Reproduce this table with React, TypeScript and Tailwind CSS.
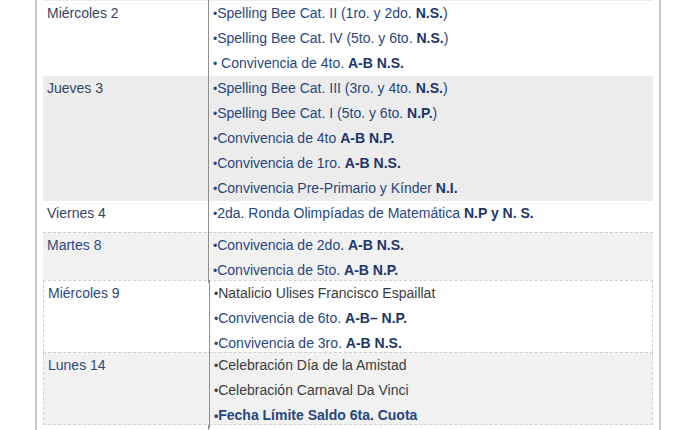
const blue = "text-[#27477f]";
const gray = "text-[#3b3b3b]";

type Line = { text: string; bold?: string; tail?: string; tone?: "blue" | "gray"; strong?: boolean; sep?: string };

type Row = {
  day: string;
  lines: Line[];
  h: string;
  bg: string;
  frame: string;
};

const rows: Row[] = [
  {
    day: "Miércoles 2",
    h: "h-[75px]",
    bg: "bg-white",
    frame: "",
    lines: [
      { text: "Spelling Bee Cat. II (1ro. y 2do. ", bold: "N.S.", tail: ")" },
      { text: "Spelling Bee Cat. IV (5to. y 6to. ", bold: "N.S.", tail: ")" },
      { text: "Convivencia de 4to. ", bold: "A-B N.S.", sep: "• " },
    ],
  },
  {
    day: "Jueves 3",
    h: "h-[125px]",
    bg: "bg-[#ececec]",
    frame: "",
    lines: [
      { text: "Spelling Bee Cat. III (3ro. y 4to. ", bold: "N.S.", tail: ")" },
      { text: "Spelling Bee Cat. I (5to. y 6to. ", bold: "N.P.", tail: ")" },
      { text: "Convivencia de 4to ", bold: "A-B N.P." },
      { text: "Convivencia de 1ro. ", bold: "A-B N.S." },
      { text: "Convivencia Pre-Primario y Kínder ", bold: "N.I." },
    ],
  },
  {
    day: "Viernes 4",
    h: "h-[31px]",
    bg: "bg-white",
    frame: "",
    lines: [{ text: "2da. Ronda Olimpíadas de Matemática ", bold: "N.P y N. S." }],
  },
  {
    day: "Martes 8",
    h: "h-[48px]",
    bg: "bg-[#f1f1f1]",
    frame: "border-t border-dashed border-[#cfcfcf]",
    lines: [
      { text: "Convivencia de 2do. ", bold: "A-B N.S." },
      { text: "Convivencia de 5to. ", bold: "A-B N.P." },
    ],
  },
  {
    day: "Miércoles 9",
    h: "h-[72px]",
    bg: "bg-white",
    frame: "border-t border-dashed border-[#cfcfcf]",
    lines: [
      { text: "Natalicio Ulises Francisco Espaillat", tone: "gray" },
      { text: "Convivencia de 6to. ", bold: "A-B– N.P." },
      { text: "Convivencia de 3ro. ", bold: "A-B N.S." },
    ],
  },
  {
    day: "Lunes 14",
    h: "h-[73px]",
    bg: "bg-[#f1f1f1]",
    frame: "border-y border-dashed border-[#cfcfcf]",
    lines: [
      { text: "Celebración Día de la Amistad", tone: "gray" },
      { text: "Celebración Carnaval Da Vinci", tone: "gray" },
      { text: "Fecha Límite Saldo 6ta. Cuota", strong: true },
    ],
  },
];

function Entry({ line }: { line: Line }) {
  const tone = line.tone === "gray" ? gray : blue;
  return (
    <div className={`h-[25px] leading-[25px] whitespace-nowrap ${tone} ${line.strong ? "font-bold text-[#1f3a70]" : ""}`}>
      <span className="text-[12px]">•</span>
      {line.sep ? " " : ""}
      {line.text}
      {line.bold && <b className="text-[#1c356a]">{line.bold}</b>}
      {line.tail}
    </div>
  );
}

export default function App() {
  return (
    <div className="h-[430px] w-[700px] overflow-hidden bg-white" style={{ fontFamily: '"Liberation Sans", Arial, sans-serif' }}>
      <div className="ml-[35px] w-[626px] h-[430px] border-x-2 border-[#c9c9c9] px-[6px]">
        <div className="border-t border-[#ececec]" />
        {rows.map((r, i) => (
          <div key={i} className={`grid grid-cols-[165px_1fr] text-[14px] ${r.h} ${r.bg} ${r.frame} ${i >= 4 ? "border-x border-dashed border-[#d2d2d2]" : ""}`}>
            <div className={`pl-1 leading-[25px] ${i >= 3 ? "text-[#2e4a7c]" : "text-[#36455f]"}`}>{r.day}</div>
            <div className="border-l border-[#8f8f8f] pl-[4px] -mt-px pt-px">
              {r.lines.map((l, j) => (
                <Entry key={j} line={l} />
              ))}
            </div>
          </div>
        ))}
        <div className="ml-[165px] h-full border-l border-[#8f8f8f]" />
      </div>
    </div>
  );
}
